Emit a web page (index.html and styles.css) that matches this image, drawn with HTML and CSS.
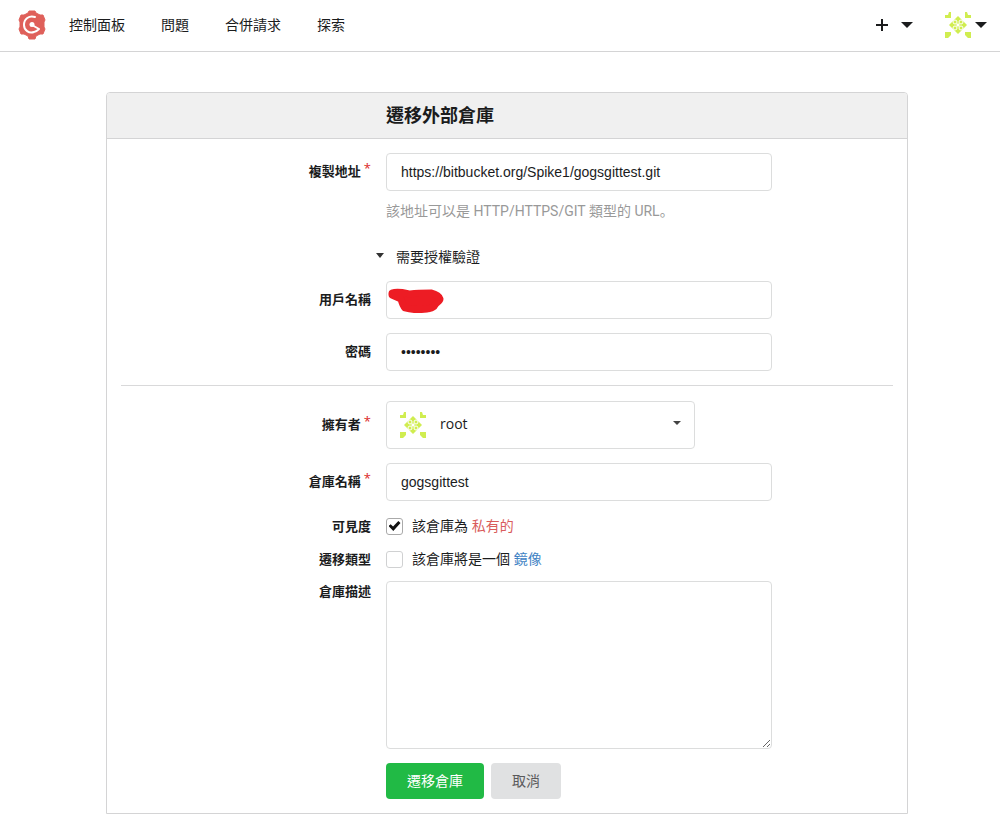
FILE: index.html
```html
<!DOCTYPE html>
<html lang="zh-Hant">
<head>
<meta charset="utf-8">
<meta name="viewport" content="width=device-width, initial-scale=1">
<title>遷移外部倉庫</title>
<link rel="stylesheet" href="styles.css">
</head>
<body>
<svg class="sprite" aria-hidden="true">
  <symbol id="avatar" viewBox="0 0 26 26">
    <path d="M4 0H6V6H0V3L3 3ZM20 0H22L23 3H26V6H20ZM0 20H6V23L3 26H0ZM20 20H26V26H23L20 23Z" fill="#d0ed50"/>
    <path d="M13 4L22 13L13 22L4 13Z" fill="#d0ed50"/>
    <g fill="#d0ed50" stroke="#fff">
      <circle cx="10" cy="10" r="2"/><circle cx="16" cy="10" r="2"/>
      <circle cx="10" cy="16" r="2"/><circle cx="16" cy="16" r="2"/>
    </g>
    <path d="M13 11L15 13L13 15L11 13Z" fill="#fff"/>
  </symbol>
</svg>

<header class="navbar">
  <nav class="nav-links">
    <a class="brand" href="#" aria-label="Gogs">
      <svg width="30" height="32" viewBox="0 0 30 32">
        <path d="M12 2H18L19 4L23 6L26 6L28 11L27 13V18L28 20L26 25L23 25L19 27L18 30H12L11 27L7 25L4 25L2 20L3 18V13L2 11L4 6L7 6L11 4Z" fill="#df605a" stroke="#df605a" stroke-linejoin="round"/>
        <path d="M18 8C12 6 7 10 7 16C7 21 12 25 17 23C19 23 21 21 22 20L15 16" fill="none" stroke="#fff" stroke-width="2" stroke-linecap="round" stroke-linejoin="round"/>
        <circle cx="15" cy="15.5" r="2.5" fill="#fff"/>
      </svg>
    </a>
    <a href="#">控制面板</a>
    <a href="#">問題</a>
    <a href="#">合併請求</a>
    <a href="#">探索</a>
  </nav>
  <div class="nav-tools">
    <button class="nav-button" type="button" aria-label="建立">
      <svg width="12" height="12" viewBox="0 0 12 12"><path d="M6 0V12M0 6H12" stroke="#1b1c1d" stroke-width="2"/></svg>
      <svg width="12" height="6" viewBox="0 0 12 6"><path d="M0 0H12L6 6Z" fill="#1b1c1d"/></svg>
    </button>
    <button class="nav-button user" type="button" aria-label="使用者">
      <svg width="26" height="26"><use href="#avatar"/></svg>
      <svg width="12" height="6" viewBox="0 0 12 6"><path d="M0 0H12L6 6Z" fill="#1b1c1d"/></svg>
    </button>
  </div>
</header>

<main class="page">
  <form class="card">
    <h1 class="card-title">遷移外部倉庫</h1>
    <div class="card-body">
      <div class="row">
        <label class="label required" for="clone">複製地址</label>
        <input class="input" id="clone" type="text" value="https://bitbucket.org/Spike1/gogsgittest.git">
      </div>
      <p class="help">該地址可以是 HTTP/HTTPS/GIT 類型的 URL<span class="stop">。</span></p>
      <button class="auth-toggle" type="button" aria-expanded="true">
        <svg width="8" height="5" viewBox="0 0 8 5"><path d="M0 0H8L4 5Z" fill="#333"/></svg>
        需要授權驗證
      </button>
      <div class="row">
        <label class="label" for="user">用戶名稱</label>
        <div class="masked">
          <input class="input" id="user" type="text">
          <svg class="scribble" width="57" height="25" viewBox="0 0 57 25"><path d="M5 5C11 3 18 5 23 6C31 5 38 5 44 5C48 6 52 8 53 11C53 13 49 15 48 17C46 21 43 20 40 21C32 22 25 22 18 20C16 18 15 15 14 11L5 7Z" fill="#ed1c24" stroke="#ed1c24" stroke-width="7" stroke-linejoin="round"/></svg>
        </div>
      </div>
      <div class="row">
        <label class="label" for="pass">密碼</label>
        <input class="input" id="pass" type="password" value="password">
      </div>
      <hr class="divider">
      <div class="row">
        <label class="label required" for="owner">擁有者</label>
        <div class="owner">
          <select class="owner-select" id="owner"><option>root</option></select>
          <svg class="owner-avatar" width="26" height="26"><use href="#avatar"/></svg>
          <svg class="owner-caret" width="8" height="4" viewBox="0 0 8 4"><path d="M0 0H8L4 4Z" fill="#444"/></svg>
        </div>
      </div>
      <div class="row">
        <label class="label required" for="repo">倉庫名稱</label>
        <input class="input" id="repo" type="text" value="gogsgittest">
      </div>
      <div class="row check-row">
        <span class="label">可見度</span>
        <div class="check"><input id="private" type="checkbox" checked><label for="private">該倉庫為 <em class="private">私有的</em></label></div>
      </div>
      <div class="row check-row">
        <span class="label">遷移類型</span>
        <div class="check"><input id="mirror" type="checkbox"><label for="mirror">該倉庫將是一個 <a href="#">鏡像</a></label></div>
      </div>
      <div class="row top">
        <label class="label" for="desc">倉庫描述</label>
        <textarea class="input area" id="desc"></textarea>
      </div>
      <div class="actions">
        <button class="btn primary" type="submit">遷移倉庫</button>
        <button class="btn" type="button">取消</button>
      </div>
    </div>
  </form>
</main>
</body>
</html>
```
FILE: styles.css
```css
* {
  box-sizing: border-box;
}

body {
  margin: 0;
  background: #fff;
  color: #1b1c1d;
  font: 14px/20px "Open Sans", "Noto Sans CJK TC", sans-serif;
}

button, select, input, textarea {
  font: inherit;
  color: inherit;
}

.sprite {
  position: absolute;
  width: 0;
  height: 0;
}

.navbar {
  display: flex;
  align-items: center;
  justify-content: space-between;
  height: 52px;
  padding: 0 13px 2px 17px;
  border-bottom: 1px solid #d4d4d5;
}

.nav-links {
  display: flex;
  align-items: center;
  gap: 36px;
}

.nav-links a {
  color: inherit;
  text-decoration: none;
}

.nav-links .brand {
  display: flex;
  margin-right: -14px;
}

.nav-tools {
  display: flex;
  align-items: center;
  gap: 32px;
}

.nav-button {
  display: flex;
  align-items: center;
  gap: 13px;
  padding: 0;
  border: 0;
  background: none;
}

.nav-button.user {
  gap: 4px;
}

.page {
  padding: 40px 92px 20px 106px;
}

.card {
  border: 1px solid #d4d4d5;
  border-radius: 4px 4px 0 0;
}

.card-title {
  margin: 0;
  padding: 10px 14px 11px 279px;
  border-bottom: 1px solid #d4d4d5;
  border-radius: 3px 3px 0 0;
  background: #f0f0f0;
  font-size: 18px;
  line-height: 24px;
  font-weight: 700;
}

.card-body {
  padding: 14px;
}

.row {
  display: flex;
  align-items: center;
  gap: 15px;
  margin-bottom: 14px;
}

.label {
  flex: none;
  width: 250px;
  padding-bottom: 2px;
  font-size: 13px;
  font-weight: 700;
  text-align: right;
}

.required::after {
  content: "*";
  margin-left: 3px;
  color: #db2828;
  font-weight: 400;
  vertical-align: 3px;
  line-height: 1;
}

.input {
  width: 50%;
  height: 38px;
  padding: 0 14px;
  border: 1px solid #dcdddd;
  border-radius: 4px;
  background: #fff;
  font-family: "Liberation Sans", Arial, sans-serif;
}

.help {
  margin: -5px 0 26px 265px;
  color: #999;
  font-family: Roboto, "Noto Sans CJK TC", sans-serif;
}

.stop {
  font-family: "Noto Sans CJK JP", sans-serif;
}

.auth-toggle {
  display: flex;
  align-items: center;
  gap: 12px;
  margin: 0 0 14px 255px;
  padding: 0;
  border: 0;
  background: none;
}

.auth-toggle svg {
  margin-bottom: 4px;
}

.masked {
  position: relative;
  width: 50%;
}

.masked .input {
  display: block;
  width: 100%;
}

.scribble {
  position: absolute;
  left: 1px;
  top: 7px;
}

.divider {
  margin: 0 0 15px;
  border: 0;
  border-top: 1px solid #d9d9da;
}

.owner {
  position: relative;
  width: 40%;
}

.owner-select {
  display: block;
  width: 100%;
  height: 48px;
  padding: 0 30px 2px 53px;
  border: 1px solid #dcdddd;
  border-radius: 4px;
  appearance: none;
  background: #fff;
}

.owner-avatar {
  position: absolute;
  left: 14px;
  top: 11px;
  pointer-events: none;
}

.owner-caret {
  position: absolute;
  right: 14px;
  top: 20px;
  pointer-events: none;
}

.check-row {
  margin-bottom: 11px;
}

.check-row .label {
  padding-top: 1px;
  padding-bottom: 1px;
}

.check {
  display: flex;
  align-items: center;
  gap: 9px;
}

.check input {
  display: grid;
  place-items: center;
  width: 17px;
  height: 17px;
  margin: 0;
  border: 1px solid #d0d1d2;
  border-radius: 3px;
  appearance: none;
  background: #fff;
}

.check input:checked {
  border-color: #aaa;
}

.check input:checked::before {
  content: "";
  width: 12px;
  height: 10px;
  background: #111;
  clip-path: polygon(0 50%, 18% 32%, 38% 54%, 82% 0, 100% 20%, 40% 100%);
}

.private {
  color: #d95c5c;
  font-style: normal;
}

.check a {
  color: #4183c4;
  text-decoration: none;
}

.row.top {
  align-items: flex-start;
}

.area {
  height: 168px;
  padding: 10px 14px;
  resize: vertical;
}

.actions {
  display: flex;
  gap: 7px;
  margin-left: 265px;
}

.btn {
  height: 36px;
  padding: 0 21px;
  border: 0;
  border-radius: 4px;
  background: #e0e1e2;
  color: #5a5a5b;
}

.btn.primary {
  background: #21ba45;
  color: #fff;
}
```
